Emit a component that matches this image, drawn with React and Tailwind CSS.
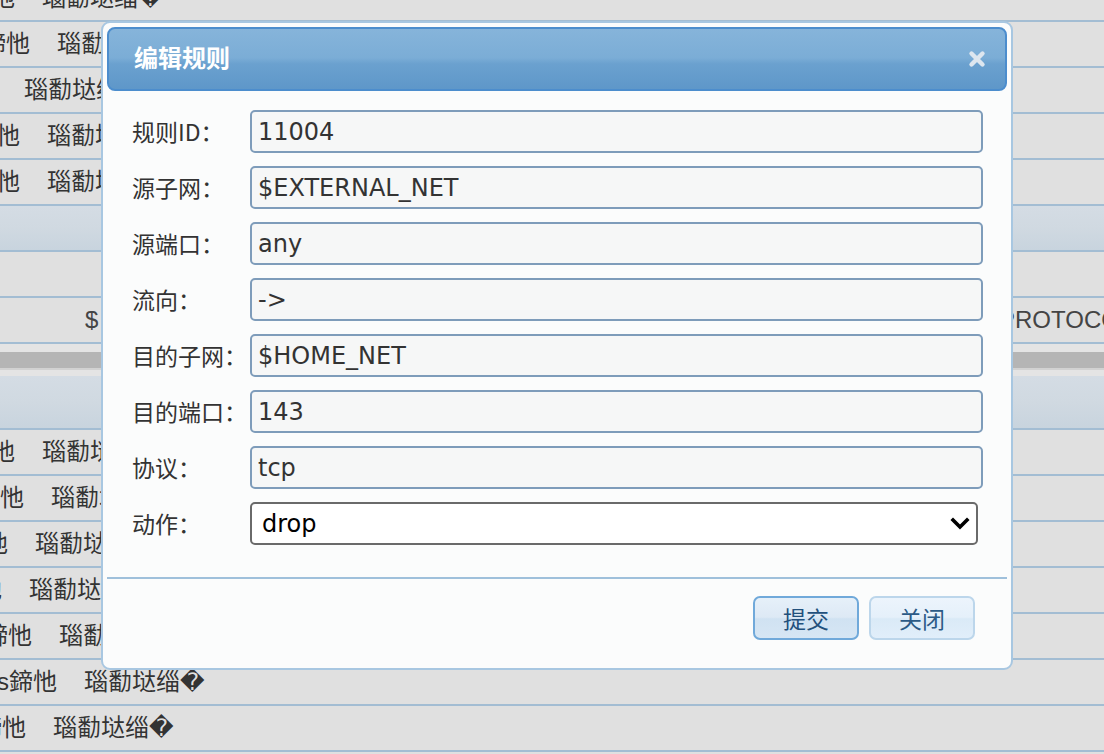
const ROW_TEXT = 's鍗忚'
const RULE_TEXT = '瑙勫垯缁�'

// each visible table row: width of the cropped first cell (ends 27px before the second)
const TOP_ROWS = [
  { cell: 'w-[30px]' },
  { cell: 'w-0', skip: true, lead: 'ml-[24px]' },
  { cell: 'w-[20px]' },
  { cell: 'w-[20px]' },
]

const BOTTOM_ROWS = ['w-[15px]', 'w-[24px]', 'w-[8px]', 'w-[2px]', 'w-[32px]', 'w-[57px]', 'w-[26px]']

const FIELDS = [
  { label: '规则ID：', value: '11004' },
  { label: '源子网：', value: '$EXTERNAL_NET' },
  { label: '源端口：', value: 'any' },
  { label: '流向：', value: '->' },
  { label: '目的子网：', value: '$HOME_NET' },
  { label: '目的端口：', value: '143' },
  { label: '协议：', value: 'tcp' },
]

function TableRow({ cell, skip, lead }) {
  return (
    <div className="flex h-[46px] items-center border-b-2 border-[#a3bdd3] bg-[#e0e0e0] whitespace-nowrap text-[24px] text-[#333]">
      {!skip && (
        <div className={`flex shrink-0 justify-end overflow-hidden ${cell}`}>
          <span>{ROW_TEXT}</span>
        </div>
      )}
      <span className={skip ? lead : 'ml-[27px]'}>{RULE_TEXT}</span>
    </div>
  )
}

function BlueBand({ h }) {
  return <div className={`${h} border-b-2 border-[#a3bdd3] bg-[linear-gradient(to_bottom,#d4dce4_0%,#d0d9e1_50%,#c8d4de_100%)]`} />
}

function CloseIcon() {
  return (
    <svg width="18" height="18" viewBox="0 0 18 18">
      <path d="M3.5 3.5 L14.5 14.5 M14.5 3.5 L3.5 14.5" stroke="#dde6ef" strokeWidth="4.4" strokeLinecap="round" />
    </svg>
  )
}

function Chevron() {
  return (
    <svg className="pointer-events-none absolute right-[8px] top-[15px]" width="20" height="13" viewBox="0 0 20 13">
      <path d="M3 3 L10 10 L17 3" fill="none" stroke="#000" strokeWidth="3.6" strokeLinecap="square" />
    </svg>
  )
}

function Dialog() {
  return (
    <div className="absolute left-[101px] top-[21px] flex h-[649px] w-[912px] flex-col rounded-[9px] border-2 border-[#a8c7e1] bg-[#fbfcfc] p-[4px]">
      <div className="flex h-[64px] items-center justify-between rounded-[8px] border-2 border-[#4c8dcd] bg-[linear-gradient(to_bottom,#86b4da_0%,#7badd6_48%,#6ba1cf_58%,#5e97c9_100%)] pl-[25px] pr-[19px]">
        <span className="text-[24px] font-bold text-white">编辑规则</span>
        <CloseIcon />
      </div>

      <div className="mt-[19px] flex flex-col gap-[13px] pl-[25px] pr-[24px]">
        {FIELDS.map((f) => (
          <div key={f.label} className="flex h-[43px] items-center">
            <span className="w-[118px] shrink-0 text-[23px] text-[#333] [font-family:'Noto_Sans_CJK_SC',sans-serif]">{f.label}</span>
            <input
              readOnly
              value={f.value}
              className="h-[43px] flex-1 rounded-[5px] border-2 border-[#7e9cba] bg-[#f6f7f7] px-[6px] text-[24px] text-[#333] outline-none [font-family:'DejaVu_Sans',sans-serif]"
            />
          </div>
        ))}
        <div className="flex h-[43px] items-center pr-[5px]">
          <span className="w-[118px] shrink-0 text-[23px] text-[#333] [font-family:'Noto_Sans_CJK_SC',sans-serif]">动作：</span>
          <div className="relative h-[43px] flex-1">
            <select
              defaultValue="drop"
              className="h-full w-full appearance-none rounded-[5px] border-2 border-[#6a6a6a] bg-white pl-[10px] text-[24px] text-black outline-none [font-family:'DejaVu_Sans',sans-serif]"
            >
              <option value="drop">drop</option>
              <option value="pass">pass</option>
              <option value="alert">alert</option>
            </select>
            <Chevron />
          </div>
        </div>
      </div>

      <div className="mt-[32px] h-[2px] bg-[#9fc0db]" />

      <div className="mt-[17px] flex justify-end gap-[10px] pr-[32px] [font-family:'Noto_Sans_CJK_SC',sans-serif]">
        <button className="h-[44px] w-[106px] rounded-[7px] border-2 border-[#70a9da] bg-[linear-gradient(to_bottom,#e6f0f9_0%,#dde9f5_48%,#d0e2f2_52%,#d6e6f4_100%)] text-[23px] text-[#22507c]">
          提交
        </button>
        <button className="h-[44px] w-[106px] rounded-[7px] border-2 border-[#bcd6eb] bg-[linear-gradient(to_bottom,#ecf4fc_0%,#e5f0fa_48%,#daeaf7_52%,#e1eefa_100%)] text-[23px] text-[#2b5a86]">
          关闭
        </button>
      </div>
    </div>
  )
}

export default function App() {
  return (
    <div className="relative h-[754px] w-[1104px] overflow-hidden bg-[#e0e0e0] [font-family:'Liberation_Sans','Noto_Sans_CJK_SC','DejaVu_Sans',sans-serif]">
      <div className="h-[22px] overflow-hidden border-b-2 border-[#a3bdd3]">
        <div className="-mt-[25px] flex h-[46px] items-center whitespace-nowrap text-[24px] text-[#333]">
          <div className="flex w-[15px] shrink-0 justify-end overflow-hidden">
            <span>{ROW_TEXT}</span>
          </div>
          <span className="ml-[27px]">{RULE_TEXT}</span>
        </div>
      </div>
      {TOP_ROWS.map((r, i) => (
        <TableRow key={i} {...r} />
      ))}
      <BlueBand h="h-[46px]" />
      <TableRow cell="w-0" skip lead="hidden" />
      <div className="flex h-[46px] items-center border-b-2 border-[#a3bdd3] text-[24px] text-[#444]">
        <span className="ml-[85px]">$</span>
        <span className="ml-auto w-[105px] overflow-hidden whitespace-nowrap">PROTOCOL</span>
      </div>
      <div className="flex h-[32px] flex-col bg-[#e4e4e4] pt-[8px]">
        <div className="h-[16px] bg-[#b5b5b5]" />
        <div className="h-[2px] bg-[#d2d2d2]" />
      </div>
      <BlueBand h="h-[54px]" />
      {BOTTOM_ROWS.map((w, i) => (
        <TableRow key={i} cell={w} />
      ))}
      <Dialog />
    </div>
  )
}
